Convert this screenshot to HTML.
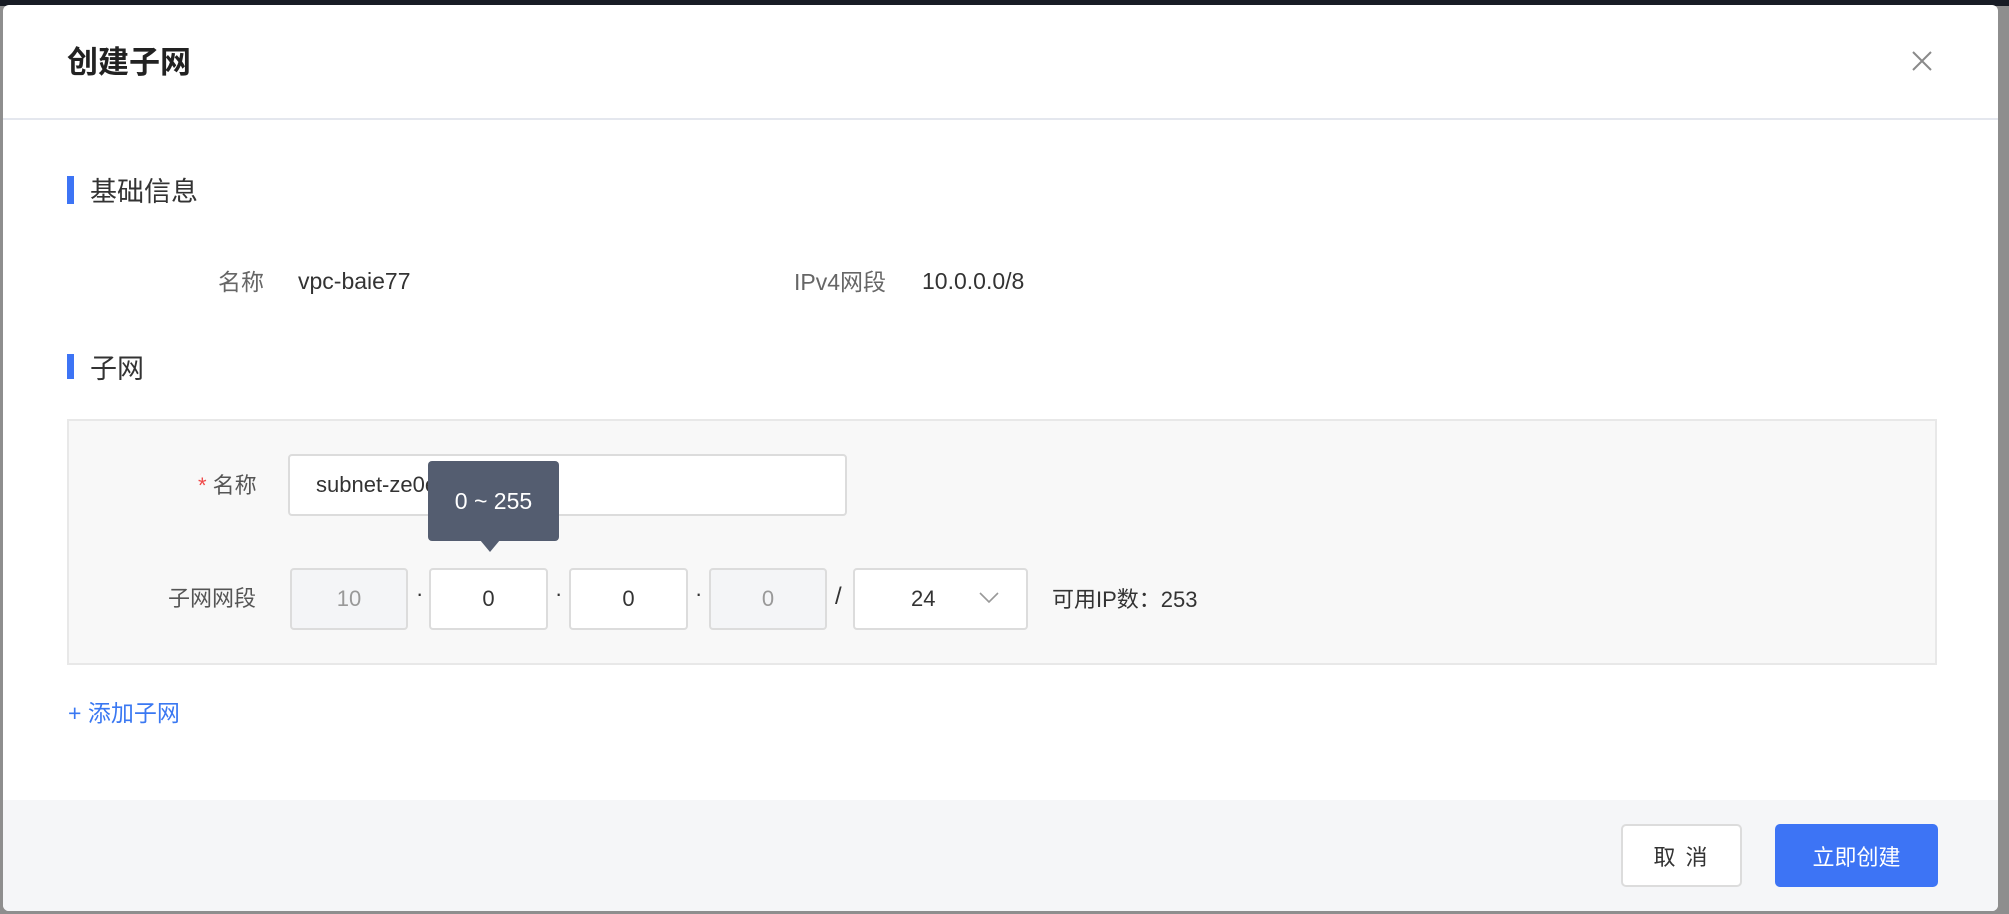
<!DOCTYPE html>
<html><head><meta charset="utf-8"><style>
*{margin:0;padding:0;box-sizing:border-box}
body{width:2009px;height:914px;background:#8e8e8e;position:relative;overflow:hidden;font-family:"Liberation Sans","Noto Sans CJK SC",sans-serif;color:#333}
.top{position:absolute;left:0;top:0;width:2009px;height:6px;background:#181c25}
.modal{position:absolute;left:3px;top:5px;width:1995px;height:906px;background:#fff;border-radius:6px;overflow:hidden}
.a{position:absolute;white-space:nowrap}
.hdr{position:absolute;left:0;top:113px;width:100%;height:2px;background:#e4e7ee}
.bar{position:absolute;width:7px;background:#3d74f5}
.box{position:absolute;left:64px;top:414px;width:1870px;height:246px;background:#f8f8f8;border:2px solid #e8e8e8}
.inp{position:absolute;background:#fff;border:2px solid #dcdcdc;border-radius:4px;font-size:22px;display:flex;align-items:center;justify-content:center;color:#333}
.dis{background:#f4f5f7;color:#999}
.foot{position:absolute;left:0;top:795px;width:100%;height:111px;background:#f5f6f8}
.btn{position:absolute;border-radius:5px;font-size:22px;display:flex;align-items:center;justify-content:center;letter-spacing:2px}
.lbl{font-size:22px;color:#555}
</style></head><body>
<div class="top"></div>
<div class="modal">
<div class="a" style="left:64px;top:32px;font-size:31px;font-weight:bold;color:#222">创建子网</div>
<svg class="a" style="left:1909px;top:46px" width="20" height="20" viewBox="0 0 20 20"><path d="M1 1L19 19M19 1L1 19" stroke="#8a8a8a" stroke-width="2"/></svg>
<div class="hdr"></div>
<div class="bar" style="left:64px;top:171px;height:28px"></div>
<div class="a" style="left:87px;top:165px;font-size:27px;color:#333">基础信息</div>
<div class="a lbl" style="left:215px;top:258px;font-size:23px;color:#666">名称</div>
<div class="a" style="left:295px;top:263px;font-size:23px;color:#333">vpc-baie77</div>
<div class="a" style="left:791px;top:258px;font-size:23px;color:#666">IPv4网段</div>
<div class="a" style="left:919px;top:263px;font-size:23px;color:#333">10.0.0.0/8</div>
<div class="bar" style="left:64px;top:349px;height:25px"></div>
<div class="a" style="left:87px;top:342px;font-size:27px;color:#333">子网</div>
<div class="box"></div>
<div class="a lbl" style="left:195px;top:463px;"><span style="color:#f04848">*</span> 名称</div>
<div class="inp" style="left:285px;top:449px;width:559px;height:62px;justify-content:flex-start;padding-left:26px">subnet-ze0e2t</div>
<div class="a lbl" style="left:165px;top:576px">子网网段</div>
<div class="inp dis" style="left:287px;top:563px;width:118px;height:62px">10</div>
<div class="a" style="left:413px;top:576px;font-size:22px">·</div>
<div class="inp" style="left:426px;top:563px;width:119px;height:62px">0</div>
<div class="a" style="left:552px;top:576px;font-size:22px">·</div>
<div class="inp" style="left:566px;top:563px;width:119px;height:62px">0</div>
<div class="a" style="left:692px;top:576px;font-size:22px">·</div>
<div class="inp dis" style="left:706px;top:563px;width:118px;height:62px">0</div>
<div class="a" style="left:832px;top:578px;font-size:24px">/</div>
<div class="inp" style="left:850px;top:563px;width:175px;height:62px;justify-content:flex-start;padding-left:56px">24</div>
<svg class="a" style="left:976px;top:587px" width="20" height="12" viewBox="0 0 20 12"><path d="M1 1L10 10L19 1" stroke="#999" stroke-width="1.6" fill="none"/></svg>
<div class="a" style="left:1049px;top:577px;font-size:22px;color:#333">可用IP数：253</div>
<div class="a" style="left:425px;top:456px;width:131px;height:80px;background:#545d70;border-radius:4px;color:#fff;font-size:23px;display:flex;align-items:center;justify-content:center">0 ~ 255</div>
<div class="a" style="left:477px;top:535px;width:0;height:0;border-left:10px solid transparent;border-right:10px solid transparent;border-top:12px solid #545d70"></div>
<div class="a" style="left:65px;top:689px;font-size:23px;color:#3a78f2">+ 添加子网</div>
<div class="foot"></div>
<div class="btn" style="left:1618px;top:819px;width:121px;height:63px;background:#fff;border:2px solid #dcdcdc;color:#333">取 消</div>
<div class="btn" style="left:1772px;top:819px;width:163px;height:63px;background:#3d74f5;color:#fff;letter-spacing:0">立即创建</div>
</div>
</body></html>
